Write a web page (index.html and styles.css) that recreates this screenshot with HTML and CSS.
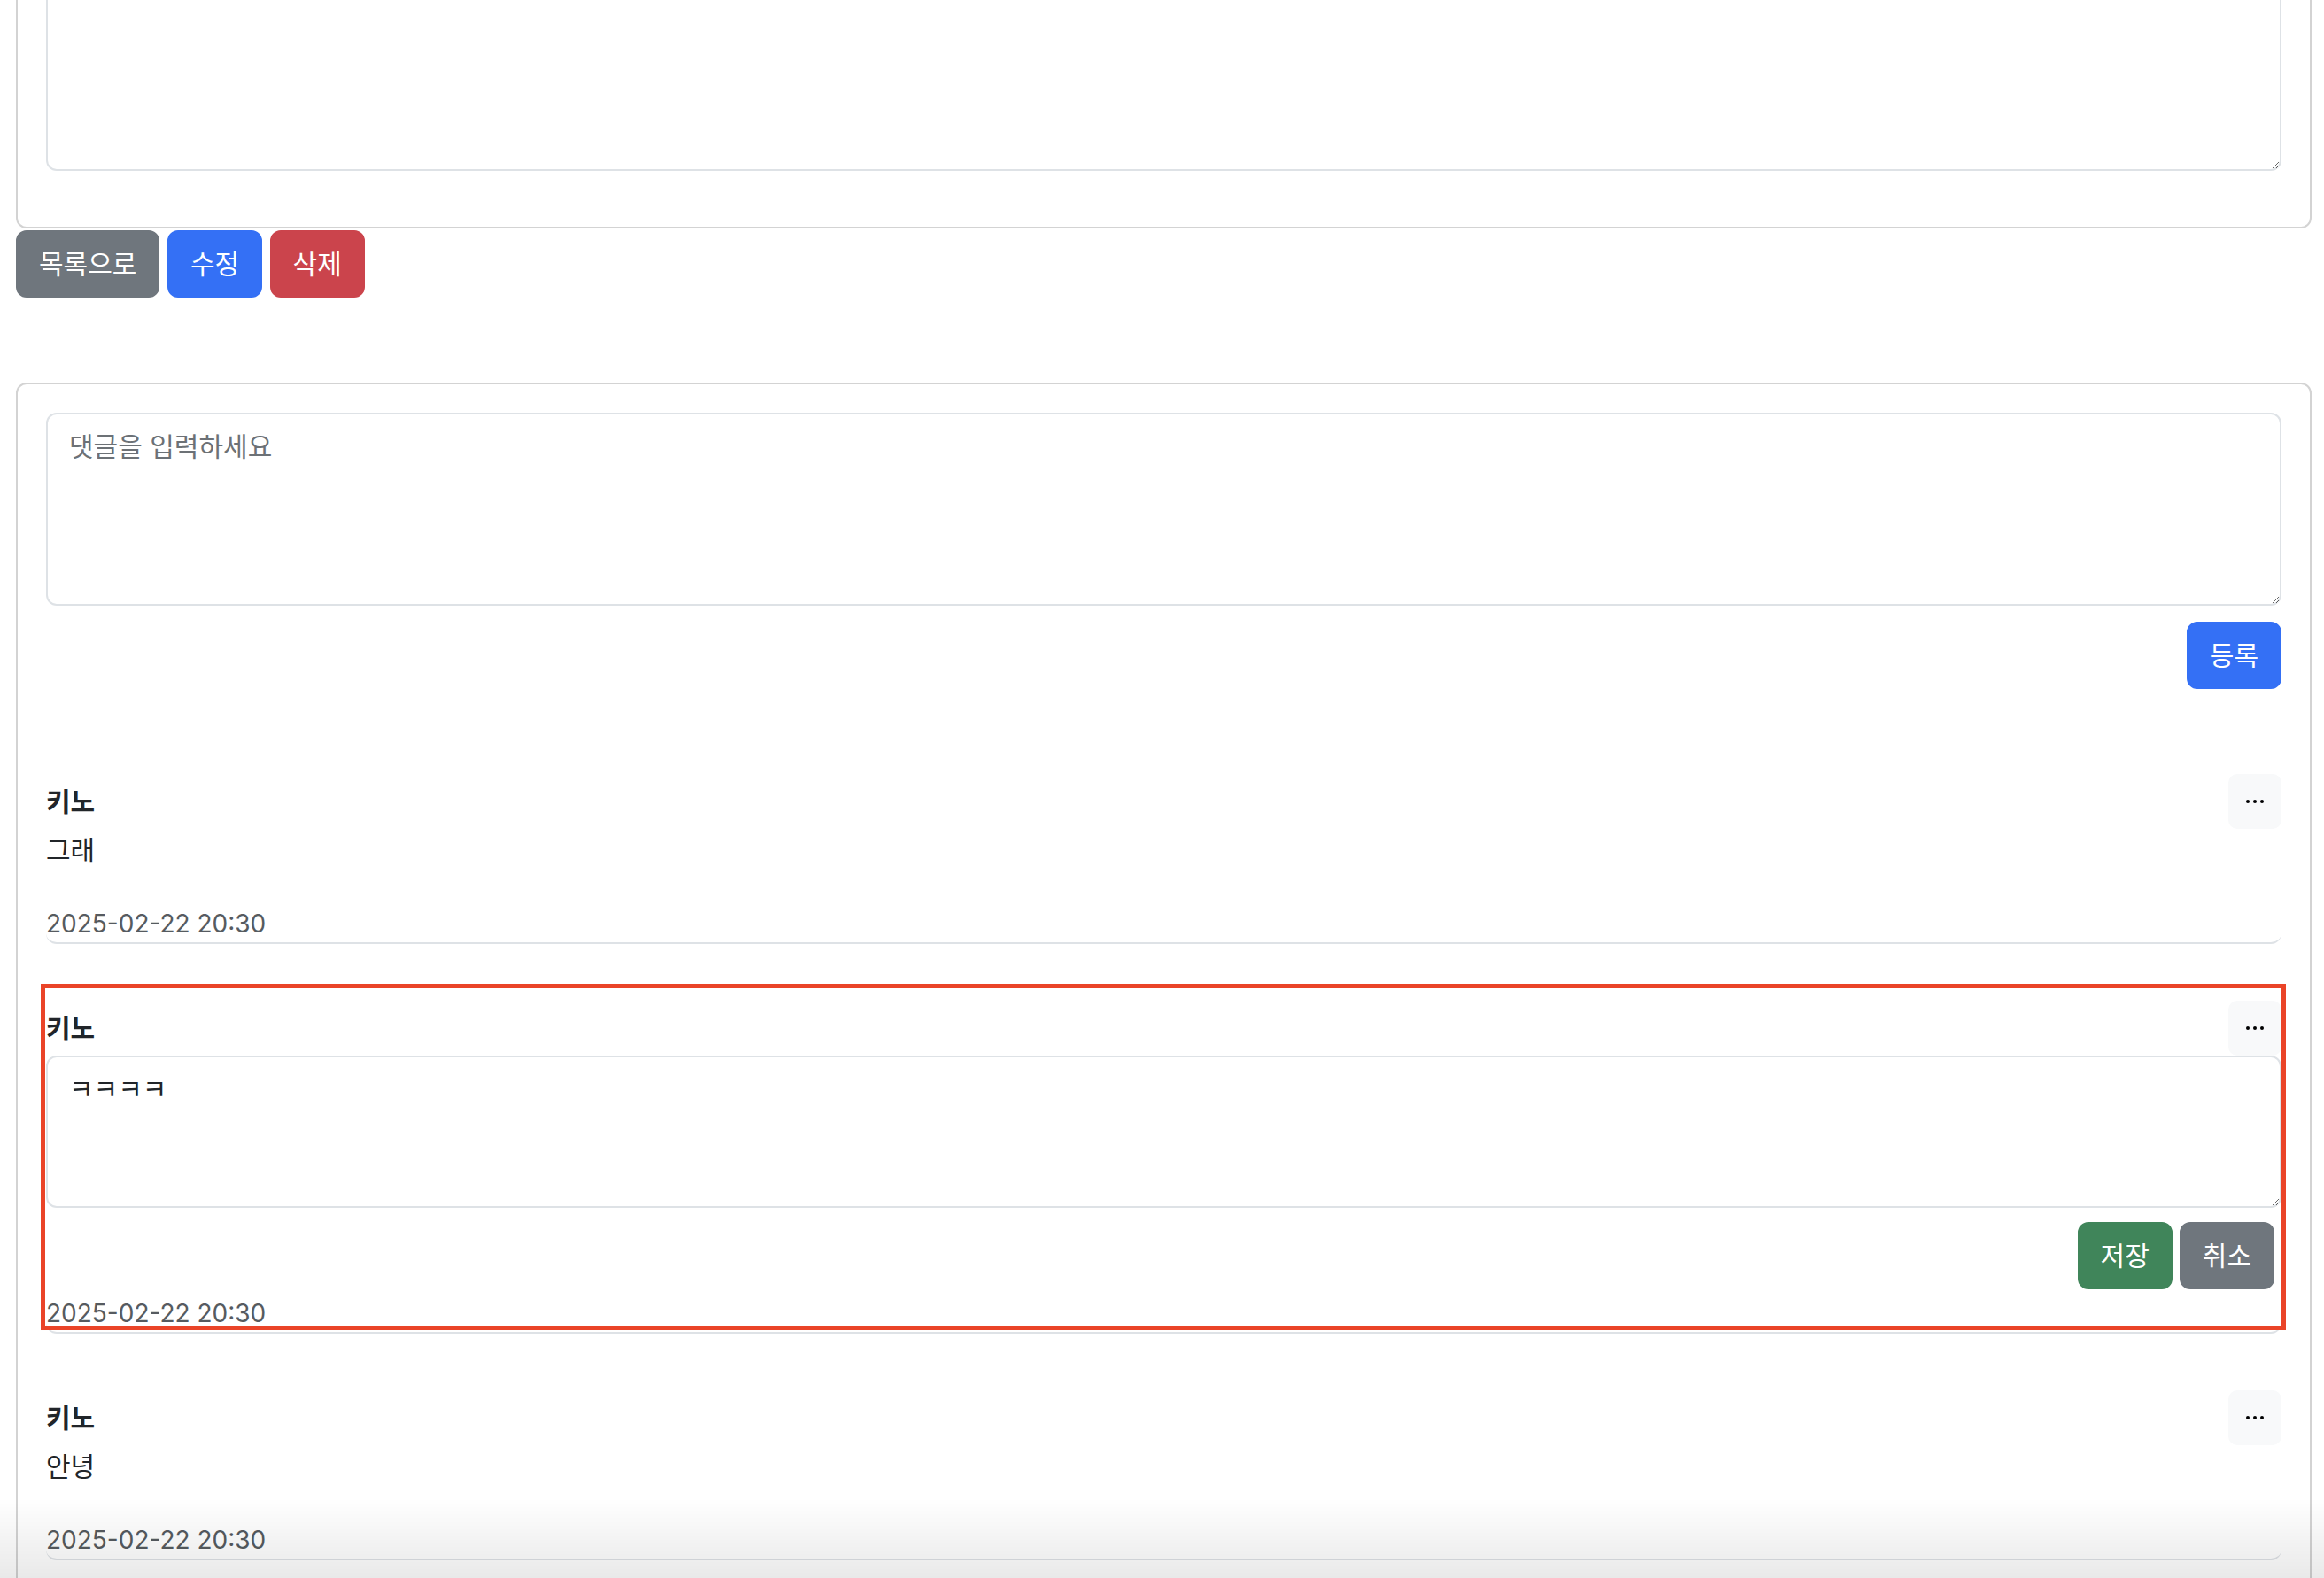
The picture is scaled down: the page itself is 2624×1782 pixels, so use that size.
FILE: index.html
```html
<!DOCTYPE html>
<html lang="ko">
<head>
<meta charset="utf-8">
<title>게시글</title>
<link rel="stylesheet" href="styles.css">
</head>
<body>
<div class="page">
  <div class="card post-card">
    <textarea class="form-control post-body" readonly></textarea>
  </div>
  <div class="post-actions">
    <button class="btn btn-secondary">목록으로</button>
    <button class="btn btn-primary">수정</button>
    <button class="btn btn-danger">삭제</button>
  </div>

  <div class="card comment-card">
    <textarea class="form-control comment-input" placeholder="댓글을 입력하세요"></textarea>
    <div class="submit-row">
      <button class="btn btn-primary">등록</button>
    </div>

    <div class="comment-list">
      <div class="comment">
        <div class="comment-head">
          <strong class="comment-name">키노</strong>
          <button class="btn-more" aria-label="더보기"><svg width="20" height="4" viewBox="0 0 20 4"><circle cx="2" cy="2" r="2"/><circle cx="10" cy="2" r="2"/><circle cx="18" cy="2" r="2"/></svg></button>
        </div>
        <p class="comment-text">그래</p>
        <small class="comment-date">2025-02-22 20:30</small>
      </div>

      <div class="comment">
        <div class="comment-head">
          <strong class="comment-name">키노</strong>
          <button class="btn-more" aria-label="더보기"><svg width="20" height="4" viewBox="0 0 20 4"><circle cx="2" cy="2" r="2"/><circle cx="10" cy="2" r="2"/><circle cx="18" cy="2" r="2"/></svg></button>
        </div>
        <textarea class="form-control edit-area">ㅋㅋㅋㅋ</textarea>
        <div class="edit-actions">
          <button class="btn btn-success">저장</button>
          <button class="btn btn-secondary">취소</button>
        </div>
        <small class="comment-date">2025-02-22 20:30</small>
        <div class="highlight"></div>
      </div>

      <div class="comment">
        <div class="comment-head">
          <strong class="comment-name">키노</strong>
          <button class="btn-more" aria-label="더보기"><svg width="20" height="4" viewBox="0 0 20 4"><circle cx="2" cy="2" r="2"/><circle cx="10" cy="2" r="2"/><circle cx="18" cy="2" r="2"/></svg></button>
        </div>
        <p class="comment-text">안녕</p>
        <small class="comment-date">2025-02-22 20:30</small>
      </div>
    </div>
  </div>
</div>
<div class="bottom-fade"></div>
</body>
</html>
```

FILE: styles.css
```css
html {
  overflow: hidden;
}

body {
  margin: 0;
  background: #fff;
  font-family: Inter, "Noto Sans CJK KR", sans-serif;
  color: #212529;
}

.page {
  display: flex;
  flex-direction: column;
  padding: 0 14px 0 18px;
}

.card {
  border: 2px solid #d3d3d3;
  border-radius: 12px;
  padding: 32px;
  background: #fff;
}

.post-card {
  margin-top: -241px;
}

.form-control {
  display: block;
  width: 100%;
  box-sizing: border-box;
  margin: 0;
  border: 2px solid #dee2e6;
  border-radius: 12px;
  padding: 12px 24px;
  font-family: inherit;
  font-size: 30px;
  line-height: 48px;
  color: #212529;
  background: #fff;
  outline: none;
}

.form-control::placeholder {
  color: #6c7176;
}

.post-body {
  height: 400px;
  margin-bottom: 31px;
}

.post-actions {
  display: flex;
  gap: 8.5px;
  margin-top: 2px;
}

.btn {
  font-family: inherit;
  font-size: 30px;
  line-height: 48px;
  padding: 12px 24px;
  border: 2px solid transparent;
  border-radius: 12px;
  color: #fff;
  cursor: pointer;
}

.btn-secondary {
  background: #6f767d;
  border-color: #6f767d;
}

.btn-primary {
  background: #3470f5;
  border-color: #3470f5;
}

.btn-danger {
  background: #cb444c;
  border-color: #cb444c;
}

.btn-success {
  background: #40855a;
  border-color: #40855a;
}

.comment-card {
  margin-top: 96px;
}

.comment-input {
  height: 218px;
}

.submit-row {
  display: flex;
  justify-content: flex-end;
  margin-top: 18px;
}

.comment-list {
  margin-top: 32px;
}

.comment {
  position: relative;
  padding-top: 64px;
  border-bottom: 2px solid #dee2e6;
  border-radius: 12px;
}

.comment-head {
  display: flex;
  justify-content: space-between;
  align-items: center;
  height: 62px;
}

.comment-name {
  font-weight: 700;
  font-size: 30px;
  line-height: 48px;
}

.btn-more {
  display: flex;
  align-items: center;
  justify-content: center;
  width: 60px;
  height: 62px;
  padding: 0;
  background: #f8f9fa;
  border: 2px solid #f8f9fa;
  border-radius: 10px;
  color: #000;
}

.btn-more svg {
  fill: #000;
}

.comment-text {
  margin: 0 0 38px;
  font-size: 30px;
  line-height: 48px;
}

.comment-date {
  display: block;
  font-size: 28px;
  line-height: 42px;
  color: #565b60;
}

.edit-area {
  height: 172px;
}

.edit-actions {
  display: flex;
  justify-content: flex-end;
  gap: 8px;
  padding-right: 8px;
  margin-top: 16px;
  margin-bottom: 6px;
}

.highlight {
  position: absolute;
  left: -6px;
  right: -5px;
  top: 45px;
  bottom: 2px;
  border: 5px solid #ea4428;
  pointer-events: none;
}

.bottom-fade {
  position: fixed;
  left: 0;
  right: 0;
  bottom: 0;
  height: 90px;
  background: linear-gradient(rgba(0, 0, 0, 0), rgba(0, 0, 0, 0.085));
  pointer-events: none;
}
```
